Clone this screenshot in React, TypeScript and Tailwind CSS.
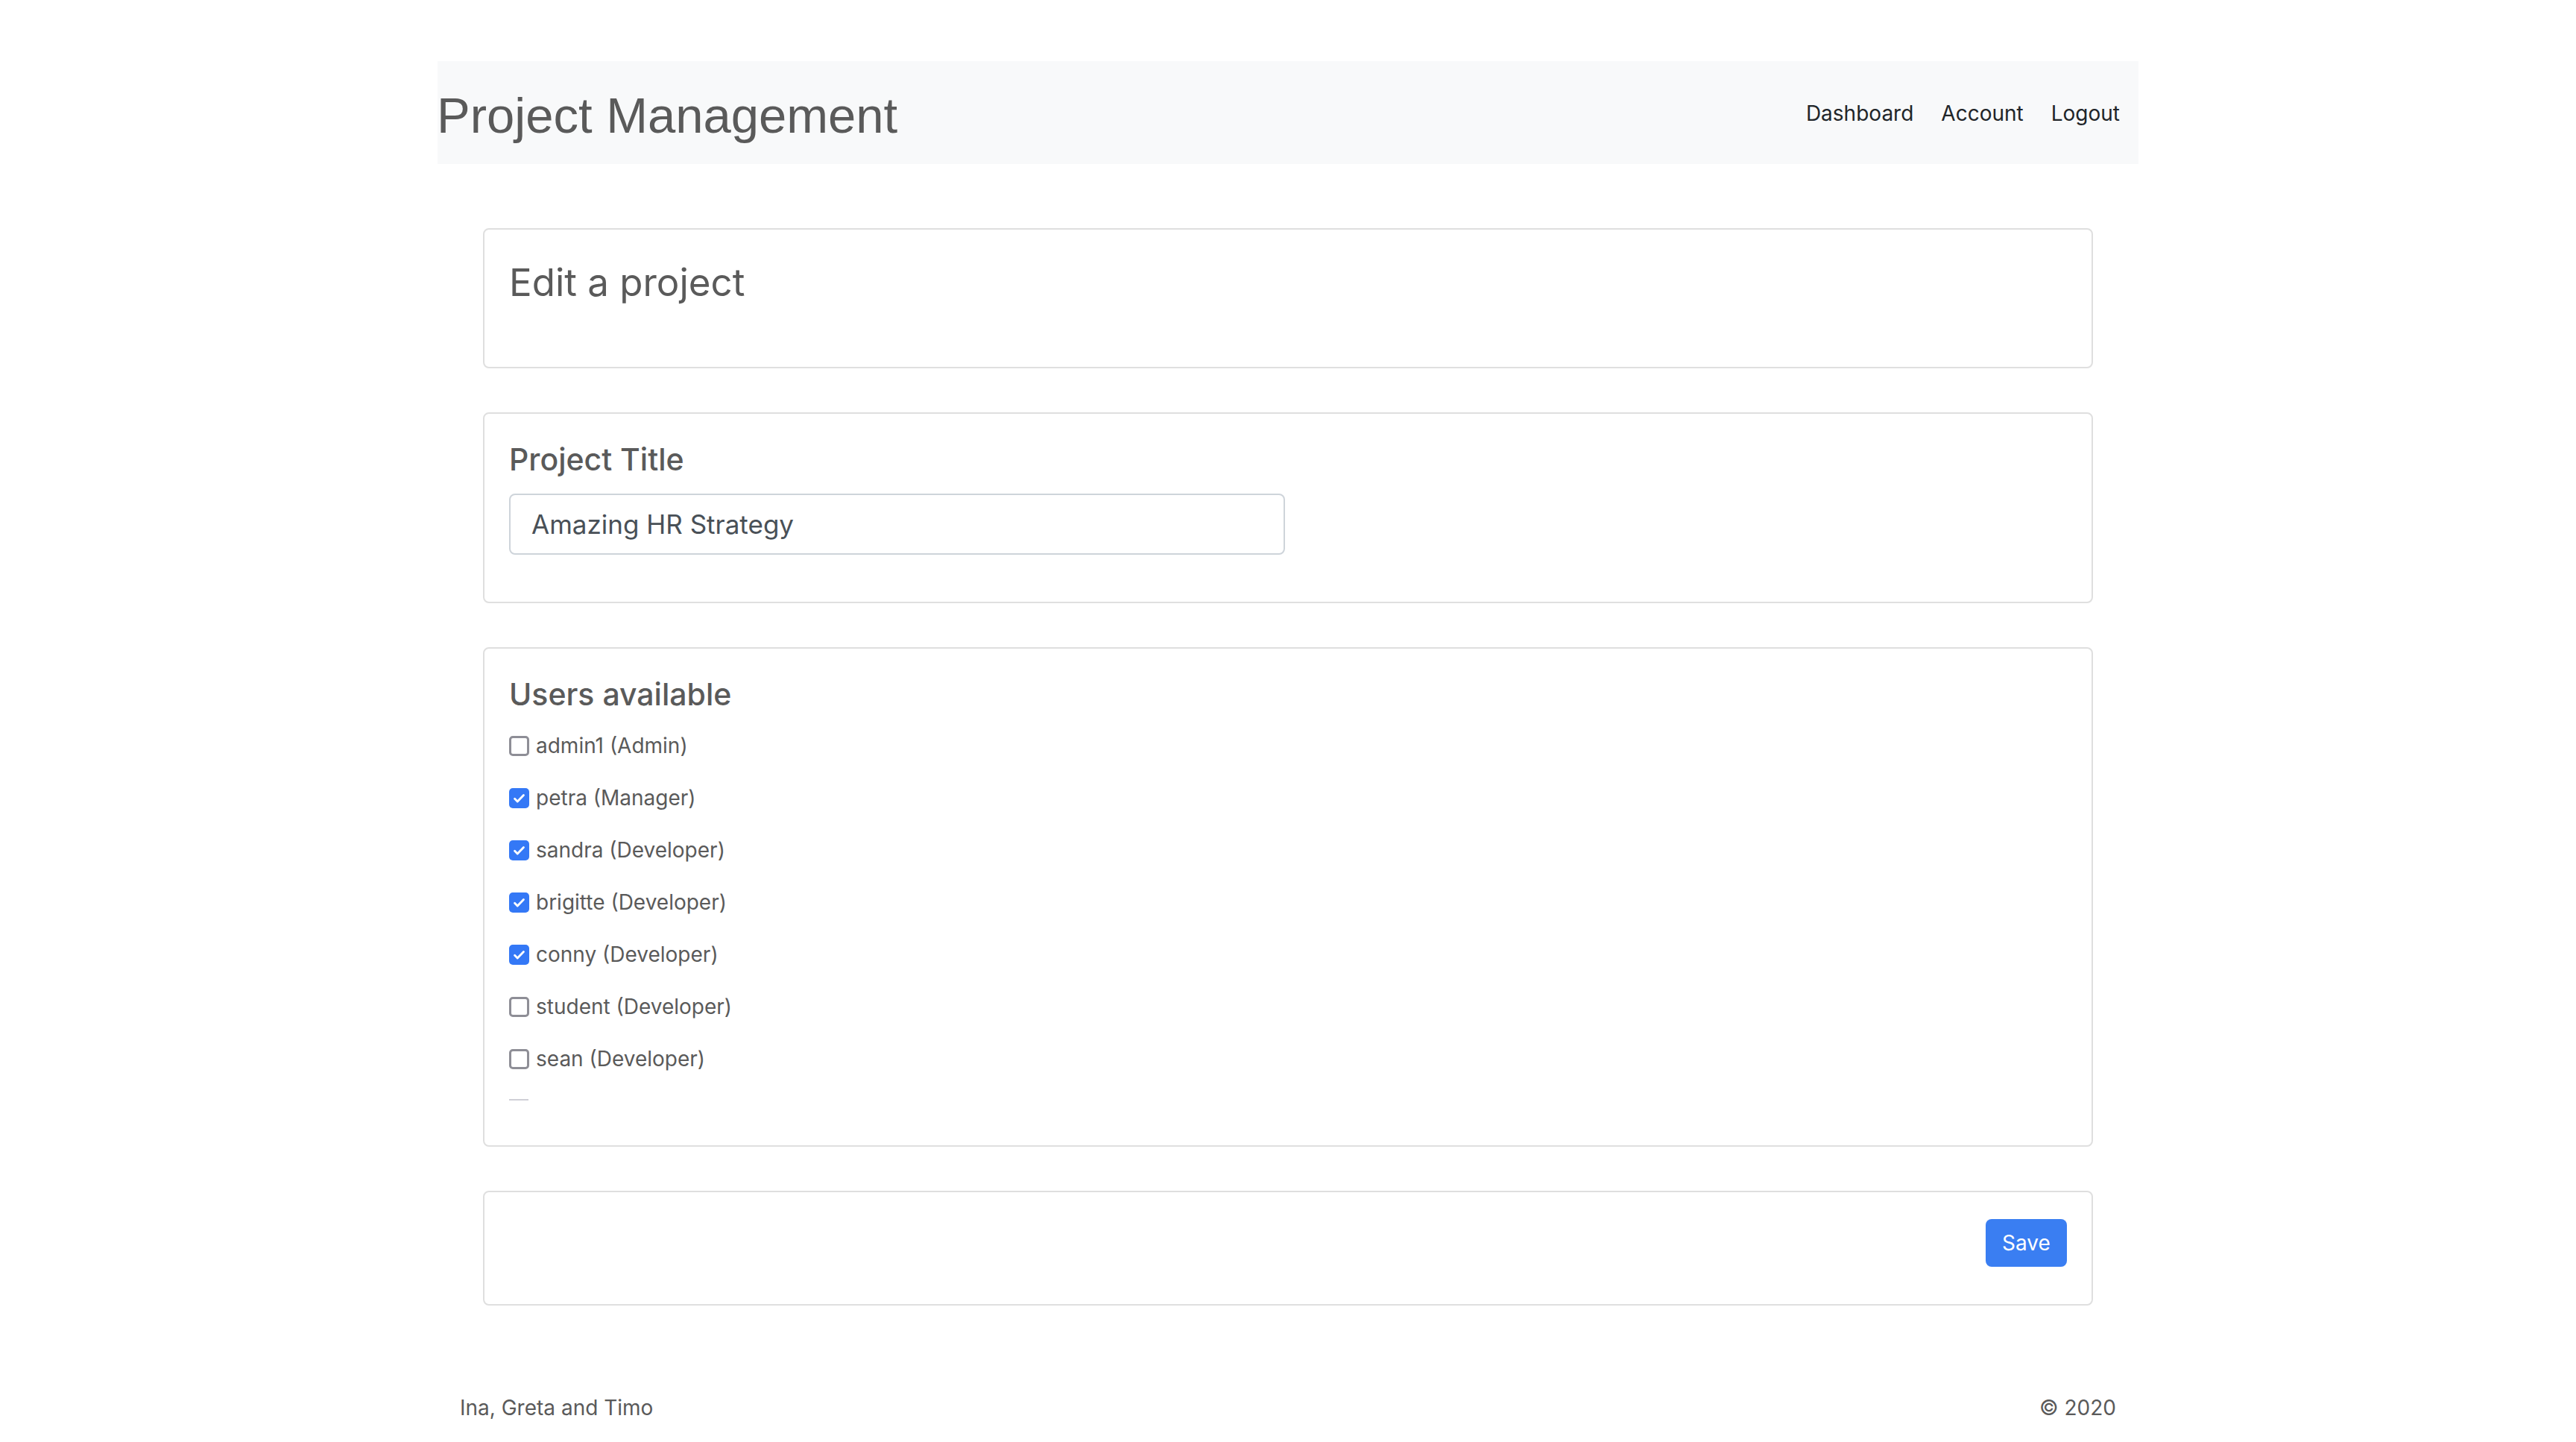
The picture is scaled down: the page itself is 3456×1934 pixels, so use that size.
import React, { useState } from "react";

const sans = { fontFamily: "Inter, 'Noto Sans', sans-serif" };

const initialUsers = [
    { name: "admin1", role: "Admin", checked: false },
    { name: "petra", role: "Manager", checked: true },
    { name: "sandra", role: "Developer", checked: true },
    { name: "brigitte", role: "Developer", checked: true },
    { name: "conny", role: "Developer", checked: true },
    { name: "student", role: "Developer", checked: false },
    { name: "sean", role: "Developer", checked: false },
];

function Check({ checked, onClick }: { checked: boolean; onClick: () => void }) {
    if (checked) {
        return (
            <span onClick={onClick} className="w-[27px] h-[27px] rounded-[5px] bg-[#3478f6] flex items-center justify-center shrink-0 cursor-pointer">
                <svg width="19" height="19" viewBox="0 0 16 16" fill="none">
                    <path d="M3 8.6l3.1 3.1L13 4.6" stroke="white" strokeWidth="2.4" strokeLinecap="round" strokeLinejoin="round" />
                </svg>
            </span>
        );
    }
    return (
        <span onClick={onClick} className="w-[27px] h-[27px] rounded-[5px] border-[3px] border-[#8e8e96] bg-white shrink-0 cursor-pointer"></span>
    );
}

export default function App() {
    const [users, setUsers] = useState(initialUsers);
    const [title, setTitle] = useState("Amazing HR Strategy");

    const toggle = (i: number) =>
        setUsers(us => us.map((u, j) => (j === i ? { ...u, checked: !u.checked } : u)));

    return (
        <div className="min-h-[1934px] bg-white" style={sans}>
            <div className="w-[2282px] mx-auto pt-[82px]">

                {/* Navbar */}
                <nav className="h-[138px] bg-[#f8f9fa] flex items-center justify-between pr-[25px]">
                    <span className="text-[67px] leading-none text-[#5a5a5a] -ml-[1px] mt-[6px]" style={{ fontFamily: "'Liberation Sans', Arial, sans-serif" }}>
                        Project Management
                    </span>
                    <div className="flex items-center gap-[37px] text-[28px] text-[#212529] mt-[2px]">
                        <a>Dashboard</a>
                        <a>Account</a>
                        <a>Logout</a>
                    </div>
                </nav>

                <div className="px-[61px] pt-[86px] flex flex-col gap-[59px]">

                    {/* Heading card */}
                    <div className="h-[188px] border-2 border-[#dfdfdf] rounded-[8px] px-[33px] pt-[40px]">
                        <h2 className="text-[51px] leading-[1.2] text-[#5a5a5a]">Edit a project</h2>
                    </div>

                    {/* Title card */}
                    <div className="h-[256px] border-2 border-[#dfdfdf] rounded-[8px] px-[33px] pt-[37px]">
                        <h3 className="text-[41px] leading-[48px] font-medium text-[#5a5a5a]">Project Title</h3>
                        <input
                            value={title}
                            onChange={e => setTitle(e.target.value)}
                            className="mt-[22px] w-[1041px] h-[82px] border-2 border-[#ced4da] rounded-[8px] px-[28px] text-[35px] text-[#495057] outline-none"
                        />
                    </div>

                    {/* Users card */}
                    <div className="h-[670px] border-2 border-[#dfdfdf] rounded-[8px] px-[33px] pt-[37px]">
                        <h3 className="text-[41px] leading-[48px] font-medium text-[#5a5a5a]">Users available</h3>
                        <div className="mt-[10px] flex flex-col">
                            {users.map((u, i) => (
                                <label key={u.name} className="h-[70px] flex items-center gap-[9px] text-[28px] text-[#5a5a5a]">
                                    <Check checked={u.checked} onClick={() => toggle(i)} />
                                    <span>{u.name} ({u.role})</span>
                                </label>
                            ))}
                        </div>
                        <div className="mt-[19px] w-[26px] h-[2px] bg-[#cfcfd6]"></div>
                    </div>

                    {/* Save card */}
                    <div className="h-[154px] border-2 border-[#dfdfdf] rounded-[8px] px-[33px] pt-[36px] flex justify-end items-start">
                        <button className="w-[109px] h-[64px] rounded-[8px] bg-[#3a7ef2] text-white text-[28px]">Save</button>
                    </div>
                </div>

                {/* Footer */}
                <footer className="mt-[116px] flex justify-between px-[30px] text-[28px] text-[#5a5a5a]">
                    <span>Ina, Greta and Timo</span>
                    <span>© 2020</span>
                </footer>
            </div>
        </div>
    );
}
